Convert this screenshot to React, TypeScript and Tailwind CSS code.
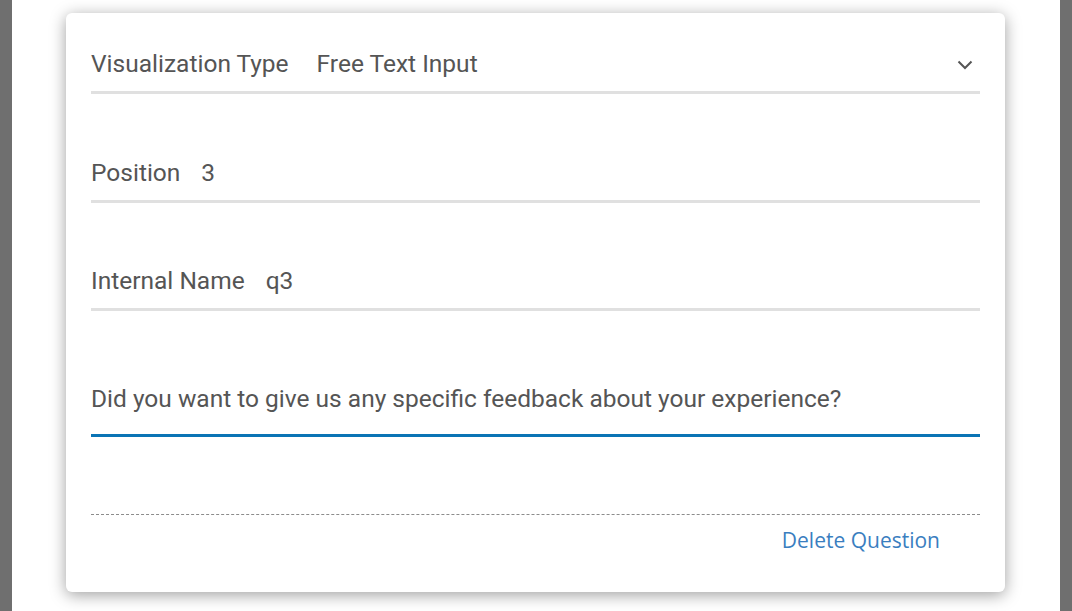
import React from "react";

export default function App() {
  return (
    <div className="flex h-[611px] w-[1072px] overflow-hidden bg-[#6f6f6f]">
      <div className="ml-[12px] w-[1048px] bg-white pl-[54px] pt-[13px]">
        <div className="flex h-[579px] w-[939px] flex-col rounded-[6px] bg-white px-[25px] pt-[23px] shadow-[0_3px_16px_rgba(0,0,0,0.38)] [font-family:Roboto,'Noto_Sans',sans-serif]">
          <div className="flex h-[58px] items-center border-b-[3px] border-[#e0e0e0] pt-[2px] text-[24.5px] text-[#555555]">
            <span>Visualization Type</span>
            <span className="ml-[28px] flex-1">Free Text Input</span>
            <svg width="16" height="10" viewBox="0 0 16 10" className="mr-[7px] mt-[1px]">
              <path d="M1.5 1.5 L8 8 L14.5 1.5" fill="none" stroke="#555" strokeWidth="2" />
            </svg>
          </div>
          <div className="mt-[51px] flex h-[58px] items-center border-b-[3px] border-[#e0e0e0] pt-[2px] text-[24.5px] text-[#555555]">
            <span>Position</span>
            <span className="ml-[21px]">3</span>
          </div>
          <div className="mt-[50px] flex h-[58px] items-center border-b-[3px] border-[#e0e0e0] pt-[2px] text-[24.5px] text-[#555555]">
            <span>Internal Name</span>
            <span className="ml-[21px]">q3</span>
          </div>
          <div className="mt-[73px] border-b-[3px] border-[#0a74b5] pb-[20px] text-[24.5px] leading-[30px] text-[#555555]">
            Did you want to give us any specific feedback about your experience?
          </div>
          <div className="mt-[77px] border-t border-dashed border-[#8c8c8c]" />
          <div className="flex justify-end pr-[40px] pt-[11px]">
            <span className="text-[21px] leading-[28px] text-[#3a7ebf] [font-family:'Open_Sans',sans-serif]">
              Delete Question
            </span>
          </div>
        </div>
      </div>
    </div>
  );
}
